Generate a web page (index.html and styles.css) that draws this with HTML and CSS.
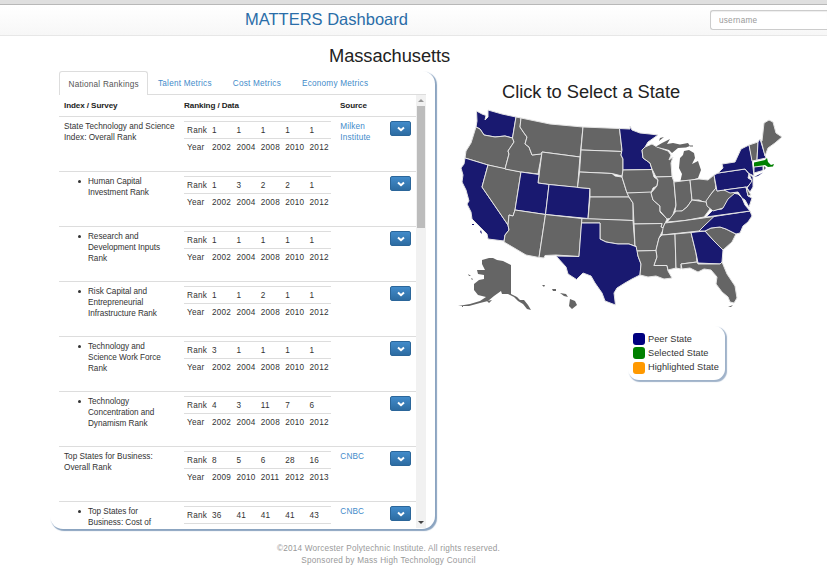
FILE: index.html
```
<!DOCTYPE html>
<html lang="en">
<head>
<meta charset="utf-8">
<title>MATTERS Dashboard</title>
<link rel="stylesheet" href="styles.css">
</head>
<body>
<div class="chrome-edge"></div>
<header class="navbar">
  <a class="brand">MATTERS Dashboard</a>
  <input class="username" type="text" placeholder="username">
</header>
<h1 class="state-title">Massachusetts</h1>
<main class="content">
  <section class="panel">
    <nav class="tabs">
      <a class="tab active">National Rankings</a>
      <a class="tab">Talent Metrics</a>
      <a class="tab">Cost Metrics</a>
      <a class="tab">Economy Metrics</a>
    </nav>
    <div class="scroller">
      <div class="rows" id="rows">
        <div class="row head"><span>Index / Survey</span><span>Ranking / Data</span><span>Source</span></div>
      </div>
      <div class="scrollbar"><i class="up"></i><i class="thumb"></i><i class="down"></i></div>
    </div>
  </section>
  <section class="map-side">
    <h2 class="map-title">Click to Select a State</h2>
    <svg class="map" viewBox="450 104 340 212" width="340" height="212">
      <g class="states">
        <path class="peer" d="M476.500 111L482 114L486 115.500L485 120L488 117L488 110L502 114L516 117L512.500 138L505 136L495 137L484 135L480 129L476 127L477 121Z"/>
        <path d="M476 127L480 129L484 135L495 137L505 136L512.500 138L514 142L508 151L509 154L505 169L488 165L465 158L466 151L471 143Z"/>
        <path class="peer" d="M465 158L488 165L482 187L508 225L509 230L505 235L504 241L488 239L487 234L478 225L472 219L471 212L467 204L469 201L466 190L462 182L463 175L461 168L464 164Z"/>
        <path d="M488 165L521 172L515 210L513 216L509 215L508 225L482 187Z"/>
        <path d="M516 117L521 118L520 127L524 133L527 137L525 144L529 147L532 155L540 154L542 153L538 174L521 172L505 169L509 154L508 151L514 142L512.500 138Z"/>
        <path d="M521 118L550 124L583 127L580 157L542 152L541 154L532 155L529 147L525 144L527 137L524 133L520 127Z"/>
        <path d="M542 152L580 157L577.500 187.500L549 184.500L538 183Z"/>
        <path class="peer" d="M521 172L539 174.500L538 183L549 184.500L545.500 214.500L515 210Z"/>
        <path class="peer" d="M549 184.500L590 188.500L588 218.500L545.500 214.500Z"/>
        <path d="M515 210L545.500 214.500L539 257.500L526 255L504 242L505 235L509 230L508 225L509 215L513 216Z"/>
        <path d="M545.500 214.500L582 218.500L579 256.500L556 255L545 255.500L544 258L539 257.500Z"/>
        <path d="M583 127L619.500 128.500L621 141L622 151.500L581 150Z"/>
        <path d="M581 150L622 151.500L621 155L623 159L623 170L622 176L612 173.500L579.500 172Z"/>
        <path d="M579.500 172L612 173.500L615 176L622 177L626 190L629 197L590 197L590 188.500L577.500 187.500Z"/>
        <path d="M590 197L629 197L633 203L633 220.500L588 219Z"/>
        <path d="M582 218.500L633 220.500L635 246L629 244L618 244L606 242L600 239L600 223L581.500 223Z"/>
        <path class="peer" d="M581.500 223L600 223L600 239L606 242L612 243L618 244L629 244L637 247L638 256L641 264L640 275L632 279L625 283L617 288L614 293L615.500 305L605 301L602 293L595 283L591 276L583 273L576.500 279.500L568 274L566 267L556 256L579 256.500Z"/>
        <path class="peer" d="M619.500 128.500L630 129L630 126L632 130L640 133L650 134L658 135L648 142L645 147L642 150L643 158L650 163L652 169.500L623 170L623 159L621 155L622 150Z"/>
        <path d="M623 170L652 169.500L654 177L658 180L657 186L653 188L651 193L627 193L622 177Z"/>
        <path d="M627 193L651 192L653 200L660 206L660 212L667 219L663 228L661 227L662 223.500L634 224L633 203L629 197Z"/>
        <path d="M634 224L662 223.500L661 227L664 228L659 238L656 250.500L637 251L636 246L635 246Z"/>
        <path d="M637 251L656 250.500L657 257L654 265.500L667 265.500L668 271L672 278L664 279L656 276L648 277L640 275L641 264L638 256Z"/>
        <path d="M645 147L652 144L657 147L668 151L671 155L669 160L673 157L671 163L672 176.500L656 177L652 169L650 163L643 158L642 150Z"/>
        <path d="M656 177L672 176.500L674 182L676 205L672 218L667 219L660 211L660 206L653 200L651 193L657 186L658 180Z"/>
        <path class="bare" d="M656 146.500L662 143L670 139L667 144L673 143L680 144.500L688 143L690 146L686 147.500L678 148L672 153L669 150Z"/>
        <path class="bare" d="M680.500 180.500L682 174L679 168L680 158L683 155L684 151L689 150L694 153L695 158L692 164L698 161L701 170L698 178L691 180Z"/>
        <path d="M674 182L690 180L692 200L687 207L682 211L675 212L676 205Z"/>
        <path d="M690 180L699 179L708 180L714 175L716 188L711 194L706 203L699 200L692 200Z"/>
        <path d="M667 222L672 216L676 211L682 211L687 207L692 200L699 201L706 202L710 209L704 217L685 220.500L667 222Z"/>
        <path d="M665 223L685 220.500L714 216.500L712 220L705 225L699 231L662 235L663 228Z"/>
        <path d="M662 235L675 234L676 268L668 270L667 265.500L654 265.500L657 257L656 250L659 238Z"/>
        <path d="M675 234L691 232.500L696 253L697 262L681 264L681 269L676 268Z"/>
        <path class="peer" d="M691 232.500L705 231L714 241L723 250L722 262L720 264L698 263L696 253Z"/>
        <path d="M681 264L697 262L698 264L720 264L722 262L727 274L735 286L737 298L734 303L730 302L728 297L722 292L716 284L717 277L711 270L704 269L698 272L690 268L682 269Z"/>
        <path d="M705 231L711 228L720 227L726 229L736 234L732 242L723 250L714 241Z"/>
        <path class="peer" d="M714 216.500L750 211L752 216L748 222L743 226L740 233L736 234L726 229L720 227L711 228L705 231L699 231L705 225Z"/>
        <path class="peer" d="M706 217L713 210L722 209L726 200L732 193L738 194L742 198L745 205L750 211Z"/>
        <path d="M716 184L717 191L724 190L731 191L735 193L728 199L723 208L713 211L707 206L706 201L711 194L716 188Z"/>
        <path class="peer" d="M714 175L718 173L745 169L749 174L748 178L753 181L747 187L717 191Z"/>
        <path class="peer" d="M718 173L723 168L722 164L735 162L741 149L749 145L752 158L754 176L749 173.500L745 169Z"/>
        <path d="M749 145L758 142L757 160L752 161Z"/>
        <path class="peer" d="M758 142L760 139L766 158L757 160Z"/>
        <path d="M762 141L764 123L769 120L773 122L776 133L782 137L775 143L768 148L765 156L761 140Z"/>
        <path class="peer" d="M749 174L753 177L753 187L750 192L747 188L752 181Z"/>
        <path class="peer" d="M724 190L746 187L748 196L752 198L749 207L745 200L742 198L738 192L730 193Z"/>
        <path d="M746 187L751 195L748 196Z"/>
        <path class="peer" d="M754 167L763 166L763 170.500L754 173Z"/>
        <path class="bare" d="M764 166L766 168L764 170Z"/>
        <path class="selected bare" d="M754 162.500L765 160L767 158L768 162L771 165L774 164L773 166.500L768 167L765 165L754 166.500Z"/>
      </g>
      <g class="islands">
        <path class="peer" d="M754 177L763 172.500L758 176Z"/>
        <path d="M482 260L489 258L493 258L497 260L503 261L511 265L511 294L517 297L520 300L524 300L528 305L531 310L527 309L523 304L518 301L514 297L508 294L502 294L501 291L494 296L488 301L480 303L469 306L458 306L470 304L480 301L486 297L478 295L474 290L474 284L479 280L484 279L484 275L478 274L477 270L485 270L482 264Z"/>
        <path d="M542 285l3 0l-1 2zM552 289l4 0l0 2l-3 0zM560 293l6 1l2 3l-4 -1zM570 299l5 2l2 4l-5 4l-3 -3zM468 274l3 2l-2 0zM471 278l2 1l-1 1zM487 301l5 -1l-3 3z"/>
        <path d="M462 306h1v1h-1zM728 307l5 -2l-2 2zM664 137l-5 4l1 -3zM690 145.500l3 0l0 1l-3 0z"/>
        <path class="peer" d="M472 224h2v1h-2zM481 230l1 4l-2 -2z"/>
      </g>
    </svg>
    <div class="legend">
      <div class="legend-item"><i class="swatch navy"></i>Peer State</div>
      <div class="legend-item"><i class="swatch green"></i>Selected State</div>
      <div class="legend-item"><i class="swatch orange"></i>Highlighted State</div>
    </div>
  </section>
</main>
<footer class="footer"><p class="copyright">©2014 Worcester Polytechnic Institute. All rights reserved.</p><p class="sponsor">Sponsored by Mass High Technology Council</p></footer>
<script src="rows.js"></script>
</body>
</html>
```
FILE: styles.css
```
* { box-sizing: border-box; }
body { margin: 0; height: 575px; overflow: hidden; background: #fff; color: #333; font: 8.200px/11px "Liberation Sans", Arial, sans-serif; letter-spacing: .23px; }
h1, h2, p { margin: 0; font-weight: 400; }
.chrome-edge { height: 5px; background: #dfdfdf; border-bottom: 1px solid #b8b8b8; }
.navbar { height: 31px; display: flex; justify-content: space-between; padding-left: 245px; background: linear-gradient(#fff, #f7f7f7); border-bottom: 1px solid #e7e7e7; }
.brand { color: #2a6da8; font-size: 16.500px; line-height: 29px; letter-spacing: 0; white-space: nowrap; }
.username { width: 117px; height: 20px; margin-top: 5px; padding: 0 8px; border: 1px solid #ccc; border-right: 0; border-radius: 3px 0 0 3px; font: inherit; letter-spacing: .23px; box-shadow: inset 0 1px 1px #eee; }
.username::placeholder { color: #999; }
.state-title { height: 34px; padding-left: 329px; font-size: 18.300px; line-height: 40px; letter-spacing: -.06px; color: #222; }
.content { display: flex; height: 470px; }
.panel { width: 385px; height: 458px; margin: 1px 0 0 50px; padding-left: 9px; border-radius: 13px; box-shadow: 1.500px 1.500px 1px #8ba4c0; }
.tabs { display: flex; height: 24px; width: 367px; border-bottom: 1px solid #ddd; }
.tab { padding: 0 10px; color: #428bca; line-height: 26px; white-space: nowrap; height: 24px; margin-right: 1px; }
.tab:nth-child(3) { padding-left: 10px; }
.tab.active { width: 89px; padding: 0 8px 0 8.500px; margin-right: 0; color: #555; line-height: 25px; background: #fff; border: 1px solid #ddd; border-bottom: 0; border-radius: 3px 3px 0 0; }
.scroller { display: flex; height: 433px; width: 367px; overflow: hidden; }
.rows { width: 357px; overflow: hidden; }
.row { display: grid; grid-template-columns: 120px 156px 51px 30px; height: 55px; border-top: 1px solid #ddd; }
.row.head { height: 21px; border: 0; font-weight: 700; line-height: 22px; letter-spacing: -.1px; font-size: 8.100px; color: #222; padding-left: 5px; }
.name { padding: 4px 0 0 5px; white-space: pre; letter-spacing: .02px; }
.name.child { padding-left: 29px; letter-spacing: -.04px; }
.name.child::before { content: ""; float: left; width: 3px; height: 3px; border-radius: 50%; background: #333; margin: 4px 0 0 -10px; }
.data { width: 147px; height: 34px; margin: 4px 0 0 5px; display: grid; grid-template-columns: 28px repeat(4, 24.400px) 21px; grid-auto-rows: 17px; line-height: 17px; border-top: 1px solid #ddd; background: linear-gradient(#ddd, #ddd) 0 16px / 100% 1px no-repeat; }
.data span:nth-child(6n + 1) { padding-left: 3px; }
.source { color: #428bca; padding: 4px 0 0 5.300px; white-space: pre; letter-spacing: .18px; }
.toggle { width: 21px; height: 15px; margin: 4px 0 0 4.400px; padding: 0; display: flex; align-items: center; justify-content: center; background: linear-gradient(#428bca, #2d6ca2); border: 1px solid #2b669a; border-radius: 2px; }
.scrollbar { width: 10px; display: flex; flex-direction: column; align-items: center; background: #f1f1f1; }
.up { border: 3px solid transparent; border-top: 0; border-bottom: 3px solid #999; margin: 4px 0; }
.thumb { width: 8px; height: 122px; background: #bcbcbc; }
.down { border: 3px solid transparent; border-bottom: 0; border-top: 3px solid #444; margin: auto 0 4px; }
.map-side { width: 350px; margin-left: 15px; }
.map-title { padding: 10px 0 0 52px; font-size: 18.300px; line-height: 24px; letter-spacing: -.03px; color: #222; }
.map { display: block; }
.states path, .islands path { fill: #656565; }
.states path { stroke: #e4e4e4; stroke-width: 1; stroke-linejoin: round; }
.states .bare { stroke: none; }
.map .peer { fill: #191970; }
.map .selected { fill: #008000; }
.legend { width: 97px; height: 54px; margin: 10px 0 0 178px; padding: 6px 0 0 5px; border-radius: 11px; box-shadow: 1.500px 1.500px 1px #9fb2c9; font-size: 9.200px; letter-spacing: .05px; }
.legend-item { display: flex; align-items: center; height: 14.300px; white-space: nowrap; }
.swatch { width: 12px; height: 12px; border-radius: 3px; margin-right: 3px; }
.navy { background: #000080; }
.green { background: #008000; }
.orange { background: #ff9900; }
.footer { color: #999; line-height: 12px; padding: 3px 0 0 277px; width: 500px; display: flex; flex-direction: column; align-items: center; white-space: nowrap; letter-spacing: .21px; }
.sponsor { letter-spacing: .24px; }
```
FILE: rows.js
```
const years = '2002 2004 2008 2010 2012';
const rankings = [
  ['State Technology and Science\nIndex: Overall Rank', '1 1 1 1 1', years, 'Milken\nInstitute', false],
  ['Human Capital\nInvestment Rank', '1 3 2 2 1', years, '', true],
  ['Research and\nDevelopment Inputs\nRank', '1 1 1 1 1', years, '', true],
  ['Risk Capital and\nEntrepreneurial\nInfrastructure Rank', '1 1 2 1 1', years, '', true],
  ['Technology and\nScience Work Force\nRank', '3 1 1 1 1', years, '', true],
  ['Technology\nConcentration and\nDynamism Rank', '4 3 11 7 6', years, '', true],
  ['Top States for Business:\nOverall Rank', '8 5 6 28 16', '2009 2010 2011 2012 2013', 'CNBC', false],
  ['Top States for\nBusiness: Cost of', '36 41 41 41 43', '', 'CNBC', true]
];
const cells = (label, values) => `<span>${label}</span>` + values.split(' ').map(v => `<span>${v}</span>`).join('');
document.getElementById('rows').insertAdjacentHTML('beforeend', rankings.map(([name, rank, year, source, child]) => `
  <div class="row">
    <div class="name${child ? ' child' : ''}">${name}</div>
    <div class="data">${cells('Rank', rank)}${year ? cells('Year', year) : ''}</div>
    <div class="source">${source}</div>
    <button class="toggle"><svg width="8" height="6" viewBox="0 0 8 6"><path d="M1 1.500L4 4.200L7 1.500" fill="none" stroke="#fff" stroke-width="2"/></svg></button>
  </div>`).join(''));
```
